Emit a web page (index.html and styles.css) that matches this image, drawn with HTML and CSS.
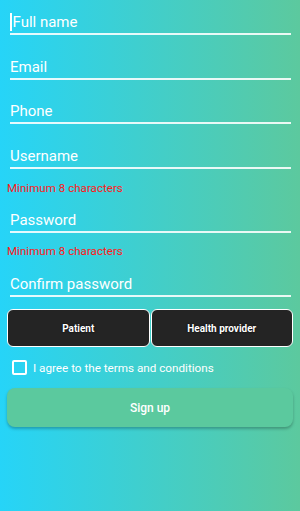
FILE: index.html
```html
<!DOCTYPE html>
<html lang="en">
<head>
  <meta charset="UTF-8">
  <title>Sign up</title>
  <link rel="stylesheet" href="styles.css">
</head>
<body>

  <div class="form">
    <div class="field first"><div class="input"><span class="caret"></span>Full name</div></div>
    <div class="field"><div class="input">Email</div></div>
    <div class="field"><div class="input">Phone</div></div>
    <div class="field"><div class="input">Username</div></div>
    <p class="error">Minimum 8 characters</p>
    <div class="field after-error"><div class="input">Password</div></div>
    <p class="error second">Minimum 8 characters</p>
    <div class="field after-error last"><div class="input">Confirm password</div></div>

    <div class="roles">
      <button class="role">Patient</button>
      <button class="role">Health provider</button>
    </div>

    <label class="agree">
      <span class="box"></span>
      I agree to the terms and conditions
    </label>

    <button class="signup">Sign up</button>
  </div>

</body>
</html>
```

FILE: styles.css
```css
body {
  margin: 0;
  height: 511px;
  background: linear-gradient(to right, #26d4f8, #5cc99e);
  font-family: Roboto, 'Noto Sans', sans-serif;
  color: white;
}

.form {
  padding: 15px 7px 0 7px;
}

.field {
  margin: 0 2px 0 3px;
  padding-top: 24.5px;
}

.field.first {
  padding-top: 0;
}

.field.after-error {
  padding-top: 18.5px;
}

.field.last {
  padding-top: 19px;
}

.input {
  font-size: 15px;
  line-height: 15px;
  padding-bottom: 3px;
  border-bottom: 2px solid rgba(255, 255, 255, 0.88);
}

.caret {
  display: inline-block;
  width: 1.5px;
  height: 18px;
  margin: -2px 1px -1px 0;
  background: white;
  vertical-align: top;
}

.error {
  margin: 12px 0 0;
  font-size: 11.6px;
  line-height: 14px;
  color: #ff1a1a;
}

.error.second {
  margin-top: 11px;
}

.roles {
  display: flex;
  gap: 1px;
  margin-top: 12px;
}

.role {
  flex: 1;
  height: 38px;
  background: #242424;
  border: 1px solid white;
  border-radius: 6px;
  color: white;
  font-family: Roboto, sans-serif;
  font-weight: bold;
  font-size: 10px;
  text-shadow: 0 0 2px black;
  cursor: pointer;
}

.agree {
  display: flex;
  align-items: center;
  gap: 6px;
  margin: 13px 0 0 5px;
  height: 15px;
  font-size: 11.7px;
}

.box {
  width: 11px;
  height: 11px;
  border: 2px solid white;
  border-radius: 2px;
}

.signup {
  display: block;
  width: 100%;
  height: 39px;
  margin-top: 13px;
  background: #5bc99e;
  border: none;
  border-radius: 8px;
  box-shadow: 0 2px 3px rgba(0, 0, 0, 0.25);
  color: white;
  font-family: Roboto, sans-serif;
  font-size: 12px;
  font-weight: 500;
  cursor: pointer;
}
```
